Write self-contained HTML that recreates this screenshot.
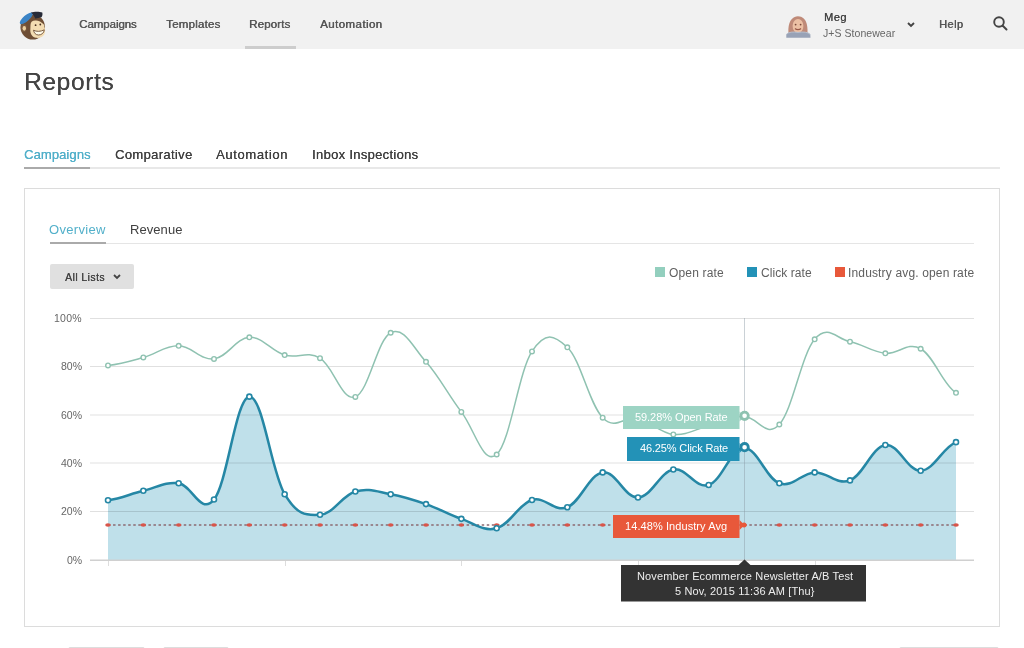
<!DOCTYPE html>
<html><head><meta charset="utf-8">
<style>
*{margin:0;padding:0;box-sizing:border-box}
html,body{width:1024px;height:648px;overflow:hidden;background:#fff;font-family:"Liberation Sans",sans-serif}
.t{position:absolute;white-space:nowrap;line-height:1;will-change:transform}
.a{position:absolute}
</style></head><body>
<div class="a" style="left:0;top:0;width:1024px;height:49px;background:#f1f1f1"></div>
<svg width="60" height="48" viewBox="0 0 60 48" style="position:absolute;left:0;top:0">
  <ellipse cx="32.7" cy="27" rx="12.2" ry="12.6" fill="#6e4e35"/>
  <ellipse cx="23.8" cy="28" rx="3" ry="3.9" fill="#7a5a3e"/>
  <ellipse cx="24.3" cy="28.3" rx="1.7" ry="2.4" fill="#eccf9e"/>
  <path d="M30.5,25 C30.5,21.5 33,20.3 36,20.6 C38.5,20.8 40.5,21.5 42,23 C43.5,23.8 44.6,25 44.2,26.5 C45.2,28.5 45.5,31.5 44.5,34 C43,37 39.5,38.3 36,37.8 C32.5,37.2 30.3,34 30.3,30.5 C30.3,28.5 30.5,26.5 30.5,25Z" fill="#f3dcb2"/>
  <path d="M33.5,30.2 C36.5,31.8 40.5,31.8 44.3,29.8 C44,33 41.5,35 38.5,35 C35.8,35 34,33 33.5,30.2Z" fill="#fffbea" stroke="#6e4e35" stroke-width="0.9"/>
  <circle cx="35.6" cy="25.2" r="0.9" fill="#4a3020"/>
  <circle cx="40.3" cy="24.5" r="0.9" fill="#4a3020"/>
  <ellipse cx="26.3" cy="18.3" rx="8.3" ry="2.9" transform="rotate(-41 26.3 18.3)" fill="#3b84c6"/>
  <path d="M31,12.5 C34,11.5 39.5,11.3 42.3,12.6 C42.8,14.5 42.3,16.3 41.5,17.3 C39.5,17.8 37,18.2 35.5,18.8 C34.5,16.5 33,14.5 31,12.5Z" fill="#272b38"/>
</svg>
<div class="a" style="left:245px;top:46px;width:51px;height:3px;background:#cdcdcd"></div>
<svg width="30" height="28" viewBox="0 0 30 28" style="position:absolute;left:782px;top:12px">
  <path d="M7,25 C5.5,17 6,5 16,4.2 C25,4.5 26.5,15 25,25Z" fill="#bf8a78"/>
  <ellipse cx="16" cy="14" rx="5.4" ry="7" fill="#ecc0a4"/>
  <circle cx="13.6" cy="12.6" r="0.9" fill="#7a4a3a"/>
  <circle cx="18.6" cy="12.6" r="0.9" fill="#7a4a3a"/>
  <path d="M13,16.5 C14.5,18 17.5,18 19,16.5" stroke="#9a5a4a" stroke-width="1.1" fill="none"/>
  <path d="M4.3,22.5 C6.5,20 11,19.5 16,20.5 C21,19.5 26,20 28.3,22.5 L28.5,25.7 L4.3,25.7Z" fill="#98a2b6"/>
  <path d="M4.3,22.5 C6.5,20 11,19.5 16,20.5 C21,19.5 26,20 28.3,22.5" stroke="#b7bfcd" stroke-width="1" fill="none"/>
</svg>
<svg width="10" height="8" viewBox="0 0 10 8" style="position:absolute;left:906px;top:20.5px"><path d="M2,2 L5,5 L8,2" stroke="#444" stroke-width="1.9" fill="none"/></svg>
<svg width="20" height="20" viewBox="0 0 20 20" style="position:absolute;left:990px;top:13px"><circle cx="9" cy="9" r="4.8" stroke="#444" stroke-width="1.9" fill="none"/><path d="M12.5,12.5 L16.5,16.5" stroke="#444" stroke-width="2" stroke-linecap="round"/></svg>
<div class="a" style="left:24px;top:167px;width:976px;height:2px;background:#e8e8e8"></div>
<div class="a" style="left:24px;top:166.5px;width:66px;height:2px;background:#aaa"></div>
<div class="a" style="left:24px;top:188px;width:976px;height:439px;border:1px solid #dcdcdc"></div>
<div class="a" style="left:50px;top:242.5px;width:924px;height:1px;background:#e5e5e5"></div>
<div class="a" style="left:50px;top:242px;width:56px;height:2px;background:#aaa"></div>
<div class="a" style="left:50px;top:264px;width:84px;height:25px;background:#e0e0e0;border-radius:2px"></div>
<svg width="10" height="8" viewBox="0 0 10 8" style="position:absolute;left:111.5px;top:273px"><path d="M2,2 L5,5 L8,2" stroke="#444" stroke-width="1.8" fill="none"/></svg>
<div class="a" style="left:655px;top:267px;width:10px;height:10px;background:#93cfbe"></div>
<div class="a" style="left:747px;top:267px;width:10px;height:10px;background:#2392b7"></div>
<div class="a" style="left:835px;top:267px;width:10px;height:10px;background:#e8583a"></div>
<div class="a" style="left:68px;top:646.5px;width:77px;height:10px;border:1px solid #ddd;border-radius:2px"></div>
<div class="a" style="left:163px;top:646.5px;width:66px;height:10px;border:1px solid #ddd;border-radius:2px"></div>
<div class="a" style="left:899px;top:646.5px;width:100px;height:10px;border:1px solid #ddd;border-radius:2px"></div>
<svg width="1024" height="648" viewBox="0 0 1024 648" style="position:absolute;left:0;top:0">
<path d="M108.00,500.23C121.43,498.43 129.91,494.01 143.33,490.79C156.76,487.57 165.24,481.63 178.67,483.29C192.09,484.94 200.57,515.96 214.00,499.50C227.43,483.04 235.91,397.66 249.33,396.65C262.76,395.64 271.24,471.74 284.67,494.18C298.09,516.61 306.57,515.25 320.00,514.75C333.43,514.24 341.91,495.42 355.33,491.51C368.76,487.61 377.24,491.79 390.67,494.18C404.09,496.57 412.57,499.41 426.00,504.10C439.43,508.79 447.91,514.26 461.33,518.86C474.76,523.46 483.24,531.88 496.67,528.30C510.09,524.71 518.57,503.98 532.00,499.98C545.43,495.98 553.91,512.49 567.33,507.24C580.76,502.00 589.24,474.24 602.67,472.40C616.09,470.56 624.57,498.12 638.00,497.56C651.43,497.01 659.91,471.88 673.33,469.49C686.76,467.10 695.24,489.05 708.67,484.98C722.09,480.91 730.57,448.40 744.00,448.07C757.43,447.75 765.91,478.67 779.33,483.29C792.76,487.91 801.24,472.95 814.67,472.40C828.09,471.84 836.57,485.58 850.00,480.38C863.43,475.19 871.91,446.89 885.33,445.05C898.76,443.21 907.24,471.25 920.67,470.70C934.09,470.15 942.57,447.57 956.00,442.15L956.00,560L108.00,560Z" fill="#bfe0ea"/>
<line x1="90" x2="974" y1="318.5" y2="318.5" stroke="#000" stroke-opacity="0.12" stroke-width="1"/>
<line x1="90" x2="974" y1="366.5" y2="366.5" stroke="#000" stroke-opacity="0.12" stroke-width="1"/>
<line x1="90" x2="974" y1="415" y2="415" stroke="#000" stroke-opacity="0.12" stroke-width="1"/>
<line x1="90" x2="974" y1="463" y2="463" stroke="#000" stroke-opacity="0.12" stroke-width="1"/>
<line x1="90" x2="974" y1="511.5" y2="511.5" stroke="#000" stroke-opacity="0.12" stroke-width="1"/>
<line x1="90" x2="974" y1="560.2" y2="560.2" stroke="#d0d0d0" stroke-width="1.4"/>
<line x1="108.5" x2="108.5" y1="561" y2="566" stroke="#dddddd" stroke-width="1"/>
<line x1="285.5" x2="285.5" y1="561" y2="566" stroke="#dddddd" stroke-width="1"/>
<line x1="461.5" x2="461.5" y1="561" y2="566" stroke="#dddddd" stroke-width="1"/>
<line x1="638.5" x2="638.5" y1="561" y2="566" stroke="#dddddd" stroke-width="1"/>
<line x1="815.5" x2="815.5" y1="561" y2="566" stroke="#dddddd" stroke-width="1"/>
<line x1="744.5" x2="744.5" y1="318" y2="562" stroke="#8a9aa4" stroke-opacity="0.45" stroke-width="1"/>
<line x1="108.0" x2="956.0" y1="524.96" y2="524.96" stroke="#8c6a72" stroke-width="1.5" stroke-dasharray="2.5,2.55"/>
<ellipse cx="108.00" cy="524.96" rx="2.8" ry="1.7" fill="#d8554a"/>
<ellipse cx="143.33" cy="524.96" rx="2.8" ry="1.7" fill="#d8554a"/>
<ellipse cx="178.67" cy="524.96" rx="2.8" ry="1.7" fill="#d8554a"/>
<ellipse cx="214.00" cy="524.96" rx="2.8" ry="1.7" fill="#d8554a"/>
<ellipse cx="249.33" cy="524.96" rx="2.8" ry="1.7" fill="#d8554a"/>
<ellipse cx="284.67" cy="524.96" rx="2.8" ry="1.7" fill="#d8554a"/>
<ellipse cx="320.00" cy="524.96" rx="2.8" ry="1.7" fill="#d8554a"/>
<ellipse cx="355.33" cy="524.96" rx="2.8" ry="1.7" fill="#d8554a"/>
<ellipse cx="390.67" cy="524.96" rx="2.8" ry="1.7" fill="#d8554a"/>
<ellipse cx="426.00" cy="524.96" rx="2.8" ry="1.7" fill="#d8554a"/>
<ellipse cx="461.33" cy="524.96" rx="2.8" ry="1.7" fill="#d8554a"/>
<ellipse cx="496.67" cy="524.96" rx="2.8" ry="1.7" fill="#d8554a"/>
<ellipse cx="532.00" cy="524.96" rx="2.8" ry="1.7" fill="#d8554a"/>
<ellipse cx="567.33" cy="524.96" rx="2.8" ry="1.7" fill="#d8554a"/>
<ellipse cx="602.67" cy="524.96" rx="2.8" ry="1.7" fill="#d8554a"/>
<ellipse cx="638.00" cy="524.96" rx="2.8" ry="1.7" fill="#d8554a"/>
<ellipse cx="673.33" cy="524.96" rx="2.8" ry="1.7" fill="#d8554a"/>
<ellipse cx="708.67" cy="524.96" rx="2.8" ry="1.7" fill="#d8554a"/>
<ellipse cx="744.00" cy="524.96" rx="2.8" ry="1.7" fill="#d8554a"/>
<ellipse cx="779.33" cy="524.96" rx="2.8" ry="1.7" fill="#d8554a"/>
<ellipse cx="814.67" cy="524.96" rx="2.8" ry="1.7" fill="#d8554a"/>
<ellipse cx="850.00" cy="524.96" rx="2.8" ry="1.7" fill="#d8554a"/>
<ellipse cx="885.33" cy="524.96" rx="2.8" ry="1.7" fill="#d8554a"/>
<ellipse cx="920.67" cy="524.96" rx="2.8" ry="1.7" fill="#d8554a"/>
<ellipse cx="956.00" cy="524.96" rx="2.8" ry="1.7" fill="#d8554a"/>
<path d="M108.00,365.43C121.43,363.91 129.91,361.17 143.33,357.45C156.76,353.72 165.24,345.55 178.67,345.83C192.09,346.11 200.57,360.51 214.00,358.90C227.43,357.29 235.91,338.10 249.33,337.36C262.76,336.62 271.24,351.07 284.67,355.03C298.09,358.98 306.57,350.22 320.00,358.17C333.43,366.13 341.91,401.72 355.33,396.89C368.76,392.06 377.24,339.43 390.67,332.76C404.09,326.09 412.57,346.77 426.00,361.80C439.43,376.84 447.91,394.29 461.33,411.90C474.76,429.51 483.24,465.98 496.67,454.49C510.09,442.99 518.57,371.77 532.00,351.40C545.43,331.03 553.91,334.68 567.33,347.28C580.76,359.88 589.24,404.19 602.67,417.70C616.09,431.22 624.57,415.26 638.00,418.43C651.43,421.60 659.91,433.02 673.33,434.40C686.76,435.78 695.24,429.08 708.67,425.69C722.09,422.30 730.57,416.77 744.00,416.54C757.43,416.31 765.91,439.16 779.33,424.48C792.76,409.80 801.24,355.02 814.67,339.30C828.09,323.57 836.57,339.05 850.00,341.72C863.43,344.38 871.91,352.00 885.33,353.33C898.76,354.67 907.24,341.24 920.67,348.73C934.09,356.23 942.57,384.41 956.00,392.78" fill="none" stroke="#8fc2b1" stroke-width="1.5"/>
<circle cx="108.00" cy="365.43" r="2.3" fill="#fff" stroke="#8fc2b1" stroke-width="1.4"/>
<circle cx="143.33" cy="357.45" r="2.3" fill="#fff" stroke="#8fc2b1" stroke-width="1.4"/>
<circle cx="178.67" cy="345.83" r="2.3" fill="#fff" stroke="#8fc2b1" stroke-width="1.4"/>
<circle cx="214.00" cy="358.90" r="2.3" fill="#fff" stroke="#8fc2b1" stroke-width="1.4"/>
<circle cx="249.33" cy="337.36" r="2.3" fill="#fff" stroke="#8fc2b1" stroke-width="1.4"/>
<circle cx="284.67" cy="355.03" r="2.3" fill="#fff" stroke="#8fc2b1" stroke-width="1.4"/>
<circle cx="320.00" cy="358.17" r="2.3" fill="#fff" stroke="#8fc2b1" stroke-width="1.4"/>
<circle cx="355.33" cy="396.89" r="2.3" fill="#fff" stroke="#8fc2b1" stroke-width="1.4"/>
<circle cx="390.67" cy="332.76" r="2.3" fill="#fff" stroke="#8fc2b1" stroke-width="1.4"/>
<circle cx="426.00" cy="361.80" r="2.3" fill="#fff" stroke="#8fc2b1" stroke-width="1.4"/>
<circle cx="461.33" cy="411.90" r="2.3" fill="#fff" stroke="#8fc2b1" stroke-width="1.4"/>
<circle cx="496.67" cy="454.49" r="2.3" fill="#fff" stroke="#8fc2b1" stroke-width="1.4"/>
<circle cx="532.00" cy="351.40" r="2.3" fill="#fff" stroke="#8fc2b1" stroke-width="1.4"/>
<circle cx="567.33" cy="347.28" r="2.3" fill="#fff" stroke="#8fc2b1" stroke-width="1.4"/>
<circle cx="602.67" cy="417.70" r="2.3" fill="#fff" stroke="#8fc2b1" stroke-width="1.4"/>
<circle cx="638.00" cy="418.43" r="2.3" fill="#fff" stroke="#8fc2b1" stroke-width="1.4"/>
<circle cx="673.33" cy="434.40" r="2.3" fill="#fff" stroke="#8fc2b1" stroke-width="1.4"/>
<circle cx="708.67" cy="425.69" r="2.3" fill="#fff" stroke="#8fc2b1" stroke-width="1.4"/>
<circle cx="779.33" cy="424.48" r="2.3" fill="#fff" stroke="#8fc2b1" stroke-width="1.4"/>
<circle cx="814.67" cy="339.30" r="2.3" fill="#fff" stroke="#8fc2b1" stroke-width="1.4"/>
<circle cx="850.00" cy="341.72" r="2.3" fill="#fff" stroke="#8fc2b1" stroke-width="1.4"/>
<circle cx="885.33" cy="353.33" r="2.3" fill="#fff" stroke="#8fc2b1" stroke-width="1.4"/>
<circle cx="920.67" cy="348.73" r="2.3" fill="#fff" stroke="#8fc2b1" stroke-width="1.4"/>
<circle cx="956.00" cy="392.78" r="2.3" fill="#fff" stroke="#8fc2b1" stroke-width="1.4"/>
<path d="M108.00,500.23C121.43,498.43 129.91,494.01 143.33,490.79C156.76,487.57 165.24,481.63 178.67,483.29C192.09,484.94 200.57,515.96 214.00,499.50C227.43,483.04 235.91,397.66 249.33,396.65C262.76,395.64 271.24,471.74 284.67,494.18C298.09,516.61 306.57,515.25 320.00,514.75C333.43,514.24 341.91,495.42 355.33,491.51C368.76,487.61 377.24,491.79 390.67,494.18C404.09,496.57 412.57,499.41 426.00,504.10C439.43,508.79 447.91,514.26 461.33,518.86C474.76,523.46 483.24,531.88 496.67,528.30C510.09,524.71 518.57,503.98 532.00,499.98C545.43,495.98 553.91,512.49 567.33,507.24C580.76,502.00 589.24,474.24 602.67,472.40C616.09,470.56 624.57,498.12 638.00,497.56C651.43,497.01 659.91,471.88 673.33,469.49C686.76,467.10 695.24,489.05 708.67,484.98C722.09,480.91 730.57,448.40 744.00,448.07C757.43,447.75 765.91,478.67 779.33,483.29C792.76,487.91 801.24,472.95 814.67,472.40C828.09,471.84 836.57,485.58 850.00,480.38C863.43,475.19 871.91,446.89 885.33,445.05C898.76,443.21 907.24,471.25 920.67,470.70C934.09,470.15 942.57,447.57 956.00,442.15" fill="none" stroke="#2587a5" stroke-width="2.5"/>
<circle cx="108.00" cy="500.23" r="2.5" fill="#fff" stroke="#2587a5" stroke-width="1.6"/>
<circle cx="143.33" cy="490.79" r="2.5" fill="#fff" stroke="#2587a5" stroke-width="1.6"/>
<circle cx="178.67" cy="483.29" r="2.5" fill="#fff" stroke="#2587a5" stroke-width="1.6"/>
<circle cx="214.00" cy="499.50" r="2.5" fill="#fff" stroke="#2587a5" stroke-width="1.6"/>
<circle cx="249.33" cy="396.65" r="2.5" fill="#fff" stroke="#2587a5" stroke-width="1.6"/>
<circle cx="284.67" cy="494.18" r="2.5" fill="#fff" stroke="#2587a5" stroke-width="1.6"/>
<circle cx="320.00" cy="514.75" r="2.5" fill="#fff" stroke="#2587a5" stroke-width="1.6"/>
<circle cx="355.33" cy="491.51" r="2.5" fill="#fff" stroke="#2587a5" stroke-width="1.6"/>
<circle cx="390.67" cy="494.18" r="2.5" fill="#fff" stroke="#2587a5" stroke-width="1.6"/>
<circle cx="426.00" cy="504.10" r="2.5" fill="#fff" stroke="#2587a5" stroke-width="1.6"/>
<circle cx="461.33" cy="518.86" r="2.5" fill="#fff" stroke="#2587a5" stroke-width="1.6"/>
<circle cx="496.67" cy="528.30" r="2.5" fill="#fff" stroke="#2587a5" stroke-width="1.6"/>
<circle cx="532.00" cy="499.98" r="2.5" fill="#fff" stroke="#2587a5" stroke-width="1.6"/>
<circle cx="567.33" cy="507.24" r="2.5" fill="#fff" stroke="#2587a5" stroke-width="1.6"/>
<circle cx="602.67" cy="472.40" r="2.5" fill="#fff" stroke="#2587a5" stroke-width="1.6"/>
<circle cx="638.00" cy="497.56" r="2.5" fill="#fff" stroke="#2587a5" stroke-width="1.6"/>
<circle cx="673.33" cy="469.49" r="2.5" fill="#fff" stroke="#2587a5" stroke-width="1.6"/>
<circle cx="708.67" cy="484.98" r="2.5" fill="#fff" stroke="#2587a5" stroke-width="1.6"/>
<circle cx="779.33" cy="483.29" r="2.5" fill="#fff" stroke="#2587a5" stroke-width="1.6"/>
<circle cx="814.67" cy="472.40" r="2.5" fill="#fff" stroke="#2587a5" stroke-width="1.6"/>
<circle cx="850.00" cy="480.38" r="2.5" fill="#fff" stroke="#2587a5" stroke-width="1.6"/>
<circle cx="885.33" cy="445.05" r="2.5" fill="#fff" stroke="#2587a5" stroke-width="1.6"/>
<circle cx="920.67" cy="470.70" r="2.5" fill="#fff" stroke="#2587a5" stroke-width="1.6"/>
<circle cx="956.00" cy="442.15" r="2.5" fill="#fff" stroke="#2587a5" stroke-width="1.6"/>
<rect x="623" y="406" width="116.5" height="23" fill="#9dd4c4"/><path d="M739.5,411.54240000000004 L744.5,416.54240000000004 L739.5,421.54240000000004Z" fill="#9dd4c4"/>
<circle cx="744.6" cy="415.8" r="3.7" fill="#fff" stroke="#8fc2b1" stroke-width="2.8"/>
<rect x="627" y="437" width="112.5" height="24" fill="#2392b7"/><path d="M739.5,443.075 L744.5,448.075 L739.5,453.075Z" fill="#2392b7"/>
<circle cx="744.6" cy="447.2" r="3.7" fill="#fff" stroke="#2587a5" stroke-width="2.8"/>
<rect x="613" y="515" width="126.5" height="23" fill="#e8583a"/><path d="M739.5,519.9584 L744.5,524.9584 L739.5,529.9584Z" fill="#e8583a"/>
<circle cx="744.00" cy="524.96" r="2.5" fill="#e8583a"/>
<rect x="621" y="565" width="245" height="36.5" fill="#333333"/>
<path d="M738,565.5 L744.5,559.5 L751,565.5Z" fill="#333333"/>
</svg>
<div class="t" style="top:19.07px;font-size:11.5px;color:#555;letter-spacing:-0.069px;text-shadow:0.45px 0 0 #555;left:78.89px;">Campaigns</div>
<div class="t" style="top:19.07px;font-size:11.5px;color:#555;letter-spacing:0.218px;text-shadow:0.45px 0 0 #555;left:166.16px;">Templates</div>
<div class="t" style="top:19.07px;font-size:11.5px;color:#555;letter-spacing:0.149px;text-shadow:0.45px 0 0 #555;left:249.09px;">Reports</div>
<div class="t" style="top:19.07px;font-size:11.5px;color:#555;letter-spacing:0.427px;text-shadow:0.45px 0 0 #555;left:319.63px;">Automation</div>
<div class="t" style="top:11.99px;font-size:11px;color:#444;letter-spacing:0.534px;text-shadow:0.25px 0 0 #444;left:823.52px;">Meg</div>
<div class="t" style="top:28.01px;font-size:10.5px;color:#666;letter-spacing:0.052px;left:823.31px;">J+S Stonewear</div>
<div class="t" style="top:19.29px;font-size:11px;color:#555;letter-spacing:0.414px;text-shadow:0.4px 0 0 #555;left:938.95px;">Help</div>
<div class="t" style="top:70.06px;font-size:24.5px;color:#444;letter-spacing:0.645px;text-shadow:0.2px 0 0 #444;left:23.71px;">Reports</div>
<div class="t" style="top:147.80px;font-size:13px;color:#52b0ca;letter-spacing:0.093px;text-shadow:0.2px 0 0 #52b0ca;left:23.67px;">Campaigns</div>
<div class="t" style="top:147.80px;font-size:13px;color:#404040;letter-spacing:0.348px;text-shadow:0.2px 0 0 #404040;left:114.59px;">Comparative</div>
<div class="t" style="top:147.80px;font-size:13px;color:#404040;letter-spacing:0.625px;text-shadow:0.2px 0 0 #404040;left:216.39px;">Automation</div>
<div class="t" style="top:147.80px;font-size:13px;color:#404040;letter-spacing:0.307px;text-shadow:0.2px 0 0 #404040;left:312.30px;">Inbox Inspections</div>
<div class="t" style="top:222.75px;font-size:13px;color:#52b0ca;letter-spacing:0.318px;left:49.34px;">Overview</div>
<div class="t" style="top:222.75px;font-size:13px;color:#404040;letter-spacing:0.063px;left:130.14px;">Revenue</div>
<div class="t" style="top:271.91px;font-size:10.5px;color:#444;letter-spacing:0.419px;text-shadow:0.25px 0 0 #444;left:64.53px;">All Lists</div>
<div class="t" style="top:267.04px;font-size:12px;color:#606060;letter-spacing:0.162px;left:669.21px;">Open rate</div>
<div class="t" style="top:267.04px;font-size:12px;color:#606060;letter-spacing:0.067px;left:761.27px;">Click rate</div>
<div class="t" style="top:267.04px;font-size:12px;color:#606060;letter-spacing:0.153px;left:848.45px;">Industry avg. open rate</div>
<div class="t" style="top:312.81px;font-size:10.5px;color:#666;letter-spacing:0.264px;left:54.27px;">100%</div>
<div class="t" style="top:361.21px;font-size:10.5px;color:#666;letter-spacing:0.000px;right:942.22px;">80%</div>
<div class="t" style="top:409.61px;font-size:10.5px;color:#666;letter-spacing:0.000px;right:942.22px;">60%</div>
<div class="t" style="top:458.01px;font-size:10.5px;color:#666;letter-spacing:0.000px;right:942.22px;">40%</div>
<div class="t" style="top:506.41px;font-size:10.5px;color:#666;letter-spacing:0.000px;right:942.22px;">20%</div>
<div class="t" style="top:554.71px;font-size:10.5px;color:#666;letter-spacing:0.000px;right:942.22px;">0%</div>
<div class="t" style="top:412.29px;font-size:11px;color:#fff;letter-spacing:-0.057px;left:635.01px;">59.28% Open Rate</div>
<div class="t" style="top:443.19px;font-size:11px;color:#fff;letter-spacing:-0.142px;left:639.73px;">46.25% Click Rate</div>
<div class="t" style="top:520.69px;font-size:11px;color:#fff;letter-spacing:0.080px;left:624.97px;">14.48% Industry Avg</div>
<div class="t" style="top:570.99px;font-size:11px;color:#eee;letter-spacing:0.148px;left:636.55px;">November Ecommerce Newsletter A/B Test</div>
<div class="t" style="top:585.99px;font-size:11px;color:#eee;letter-spacing:0.141px;left:675.40px;">5 Nov, 2015 11:36 AM [Thu}</div>
</body></html>
